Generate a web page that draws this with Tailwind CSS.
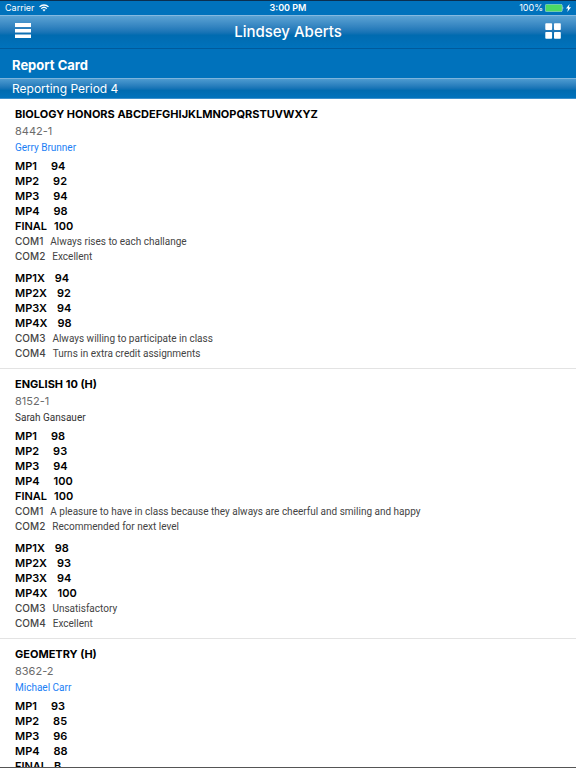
<!DOCTYPE html>
<html lang="en">
<head>
<meta charset="utf-8">
<meta name="viewport" content="width=device-width, initial-scale=1">
<title>Report Card</title>
<script src="https://cdn.jsdelivr.net/npm/@tailwindcss/browser@4"></script>
</head>
<body class="flex h-screen flex-col border-t border-[#0a2f50] border-b border-b-[#555555] bg-white font-['Inter',sans-serif] text-black">
<header class="shrink-0 bg-[#0072bc] text-white">
  <div class="grid h-[14px] grid-cols-3 items-center px-[5px] text-[9px] leading-[14px]">
    <div class="flex items-center gap-1">
      <span>Carrier</span>
      <svg class="h-[8px] w-[10px]" viewBox="0 0 20 15" fill="none" stroke="white" stroke-width="2.6" aria-label="Wi-Fi"><path d="M1 5.2C6 .3 14 .3 19 5.2M4.4 8.7c3.2-3 8-3 11.200 0"/><path d="M6.800 11.200c1.800-1.700 4.600-1.700 6.400 0L10 14.500z" fill="white" stroke="none"/></svg>
    </div>
    <div class="text-center font-semibold">3:00 PM</div>
    <div class="flex items-center justify-end gap-[2px]">
      <span>100%</span>
      <svg class="h-[8px] w-[19px]" viewBox="0 0 19 8" aria-label="Battery full"><rect x=".25" y=".25" width="17" height="7.500" rx="1.500" fill="#4cd964" stroke="#b5dcee" stroke-width=".6"/><path d="M17.800 2.700q1.200 1.300 0 2.600z" fill="white"/></svg>
      <svg class="h-[8px] w-[5px]" viewBox="0 0 5 8" fill="white" aria-label="Charging"><path d="M3.600 0 0 4.500h2.100L1.300 8 5 3.300H2.900z"/></svg>
    </div>
  </div>
  <div class="flex h-[34px] items-center justify-between border-t border-b border-t-[#84b9e0] border-b-[#005a9c] bg-linear-to-b from-[#5ba3d4] via-[#006bb0] via-60% to-[#0072bc] px-[15px]">
    <button type="button" aria-label="Menu" class="pb-[2px]">
      <svg class="h-[16px] w-[16px]" viewBox="0 0 16 16" fill="white"><path d="M0 0h16v4H0zM0 6h16v3.500H0zM0 11.500h16V15H0z"/></svg>
    </button>
    <h1 class="text-[15px] leading-[20px] font-medium">Lindsey Aberts</h1>
    <button type="button" aria-label="Grid view" class="pb-[2px]">
      <svg class="h-[16px] w-[16px]" viewBox="0 0 16 16" fill="white"><rect x=".3" y=".3" width="6.800" height="6.800" rx=".8"/><rect x="9" y=".3" width="6.800" height="6.800" rx=".8"/><rect x=".3" y="9" width="6.800" height="6.800" rx=".8"/><rect x="9" y="9" width="6.800" height="6.800" rx=".8"/></svg>
    </button>
  </div>
  <h2 class="flex h-[29px] items-center px-3 pt-[4px] text-[13px] font-bold">Report Card</h2>
  <h3 class="flex h-[21px] items-center border-t border-b border-t-[#7db4dc] border-b-[#3d90cc] bg-linear-to-b from-[#4d9bd0] via-[#006bb0] via-60% to-[#0072bc] px-3 text-[12px]">Reporting Period 4</h3>
</header>
<main id="courses" class="min-h-0 flex-1 overflow-y-auto [scrollbar-width:none]"></main>
<script>
const courses = [
  { name: 'BIOLOGY HONORS ABCDEFGHIJKLMNOPQRSTUVWXYZ', code: '8442-1', teacher: 'Gerry Brunner', link: true, groups: [
    [['MP1','94'],['MP2','92'],['MP3','94'],['MP4','98'],['FINAL','100'],['COM1','Always rises to each challange'],['COM2','Excellent']],
    [['MP1X','94'],['MP2X','92'],['MP3X','94'],['MP4X','98'],['COM3','Always willing to participate in class'],['COM4','Turns in extra credit assignments']]] },
  { name: 'ENGLISH 10 (H)', code: '8152-1', teacher: 'Sarah Gansauer', link: false, groups: [
    [['MP1','98'],['MP2','93'],['MP3','94'],['MP4','100'],['FINAL','100'],['COM1','A pleasure to have in class because they always are cheerful and smiling and happy'],['COM2','Recommended for next level']],
    [['MP1X','98'],['MP2X','93'],['MP3X','94'],['MP4X','100'],['COM3','Unsatisfactory'],['COM4','Excellent']]] },
  { name: 'GEOMETRY (H)', code: '8362-2', teacher: 'Michael Carr', link: true, groups: [
    [['MP1','93'],['MP2','85'],['MP3','96'],['MP4','88'],['FINAL','B']]] }
];
// Short labels are padded with a wider gap before the value.
const gaps = { 3: 'gap-[14px]', 4: 'gap-[10px]', 5: 'gap-[7px]' };
const row = ([label, value]) => label.startsWith('COM')
  ? `<div class="flex gap-[7px] text-[10px] leading-[15px] text-[#444444]"><dt class="font-medium">${label}</dt><dd class="font-['Roboto',sans-serif]">${value}</dd></div>`
  : `<div class="flex ${gaps[label.length]} text-[11px] leading-[15px] font-semibold"><dt>${label}</dt><dd>${value}</dd></div>`;
document.getElementById('courses').innerHTML = courses.map(c => `
  <article class="border-b border-[#e3e3e3] px-[15px] pt-[7px] pb-[7px]">
    <h4 class="text-[11px] leading-[17px] font-bold">${c.name}</h4>
    <p class="text-[11px] leading-[17px] text-[#6b6b6b]">${c.code}</p>
    ${c.link ? `<a href="#" class="block font-['Roboto',sans-serif] text-[10px] leading-[16px] text-[#1a80f5]">${c.teacher}</a>` : `<p class="font-['Roboto',sans-serif] text-[10px] leading-[16px] text-[#333333]">${c.teacher}</p>`}
    <div class="flex flex-col gap-[7px] pt-[3px]">${c.groups.map(g => `<dl>${g.map(row).join('')}</dl>`).join('')}</div>
  </article>`).join('');
</script>
</body>
</html>
